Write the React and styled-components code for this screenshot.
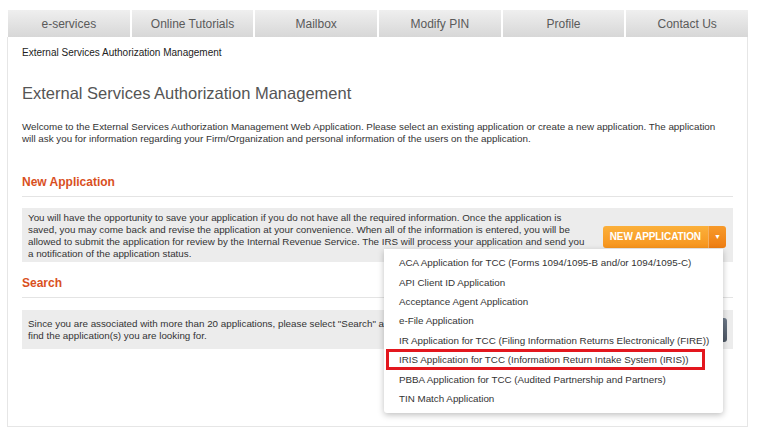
import React from "react";
import styled, { createGlobalStyle } from "styled-components";

const Global = createGlobalStyle`
  html, body { margin: 0; padding: 0; background: #fff; }
  body { font-family: "Liberation Sans", Arial, sans-serif; color: #333; }
`;

const Page = styled.div`
  width: 758px;
  height: 430px;
  padding: 10px 10px 0 7px;
  box-sizing: border-box;
  overflow: hidden;
`;

const Nav = styled.nav`
  display: flex;
  gap: 2px;
  margin-left: 1px;
  height: 27px;
`;

const Tab = styled.div`
  flex: 1;
  display: flex;
  align-items: center;
  justify-content: center;
  padding-top: 1px;
  background: linear-gradient(#efefef, #d7d7d7);
  color: #5a5a5a;
  font-size: 12px;
`;

const Container = styled.div`
  position: relative;
  border: 1px solid #e6e6e6;
  border-top: none;
  height: 390px;
  padding: 10px 14px 0 14px;
  box-sizing: border-box;
`;

const Breadcrumb = styled.div`
  font-size: 10px;
  line-height: 12px;
  color: #222;
`;

const Title = styled.h1`
  margin: 24px 0 0;
  font-size: 16.5px;
  line-height: 20px;
  font-weight: normal;
  color: #555;
`;

const Para = styled.p`
  margin: 18px 0 0;
  font-size: 9.8px;
  line-height: 12px;
  color: #333;
`;

const SectionHead = styled.h2`
  margin: ${(p) => p.$top}px 0 0;
  font-size: 12px;
  line-height: 14px;
  font-weight: bold;
  color: #d9501e;
  padding-bottom: 7px;
  border-bottom: 1px solid #e4e4e4;
`;

const GreyBox = styled.div`
  margin-top: ${(p) => p.$top}px;
  background: #ececec;
  display: flex;
  align-items: center;
  justify-content: space-between;
  padding: ${(p) => p.$pad};
  min-height: ${(p) => p.$h}px;
  box-sizing: border-box;
`;

const BoxText = styled.div`
  font-size: 9.8px;
  line-height: 12px;
  color: #333;
`;

const SplitButton = styled.div`
  display: flex;
  height: 22px;
  border-radius: 3px;
  overflow: hidden;
  margin-right: 7px;
  margin-top: 2px;
`;

const MainBtn = styled.div`
  display: flex;
  align-items: center;
  padding: 0 7px;
  background: linear-gradient(#fbb03b, #f7941d);
  color: #fff;
  font-weight: bold;
  font-size: 10px;
  letter-spacing: -0.1px;
`;

const Caret = styled.div`
  width: 17px;
  display: flex;
  align-items: center;
  justify-content: center;
  background: linear-gradient(#f79a2a, #ee7d12);
  border-left: 1px solid #f5b060;
  color: #fff;
  font-size: 7px;
`;

const SearchBtn = styled.div`
  width: 100px;
  height: 24px;
  border-radius: 3px;
  background: linear-gradient(#6f7b8b, #4c5663);
  margin-right: 6px;
`;

const Menu = styled.ul`
  position: absolute;
  left: 376px;
  top: 212px;
  width: 339px;
  margin: 0;
  padding: 4px 0 5px;
  list-style: none;
  background: #fff;
  box-shadow: 0 2px 6px rgba(0, 0, 0, 0.25);
  border-radius: 0 0 3px 3px;
`;

const Item = styled.li`
  position: relative;
  height: 19.4px;
  display: flex;
  align-items: center;
  padding-left: 15px;
  font-size: 9.8px;
  color: #333;
  white-space: nowrap;
`;

const Highlight = styled.span`
  position: absolute;
  left: 2px;
  top: -1px;
  width: 319px;
  height: 21px;
  border: 3px solid #e3171e;
  box-sizing: border-box;
`;

const menuItems = [
  "ACA Application for TCC (Forms 1094/1095-B and/or 1094/1095-C)",
  "API Client ID Application",
  "Acceptance Agent Application",
  "e-File Application",
  "IR Application for TCC (Filing Information Returns Electronically (FIRE))",
  "IRIS Application for TCC (Information Return Intake System (IRIS))",
  "PBBA Application for TCC (Audited Partnership and Partners)",
  "TIN Match Application",
];

export default function App() {
  return (
    <Page>
      <Global />
      <Nav>
        {["e-services", "Online Tutorials", "Mailbox", "Modify PIN", "Profile", "Contact Us"].map((t) => (
          <Tab key={t}>{t}</Tab>
        ))}
      </Nav>
      <Container>
        <Breadcrumb>External Services Authorization Management</Breadcrumb>
        <Title>External Services Authorization Management</Title>
        <Para>
          Welcome to the External Services Authorization Management Web Application. Please select an existing application or create a new application. The application
          <br />
          will ask you for information regarding your Firm/Organization and personal information of the users on the application.
        </Para>
        <SectionHead $top={30}>New Application</SectionHead>
        <GreyBox $top={11} $pad="3px 0 2px 6px" $h={54}>
          <BoxText>
            You will have the opportunity to save your application if you do not have all the required information. Once the application is
            <br />
            saved, you may come back and revise the application at your convenience. When all of the information is entered, you will be
            <br />
            allowed to submit the application for review by the Internal Revenue Service. The IRS will process your application and send you
            <br />
            a notification of the application status.
          </BoxText>
          <SplitButton>
            <MainBtn>NEW APPLICATION</MainBtn>
            <Caret>▼</Caret>
          </SplitButton>
        </GreyBox>
        <SectionHead $top={14}>Search</SectionHead>
        <GreyBox $top={12} $pad="0 0 0 6px" $h={39}>
          <BoxText>
            Since you are associated with more than 20 applications, please select "Search" and enter your search criteria to
            <br />
            find the application(s) you are looking for.
          </BoxText>
          <SearchBtn />
        </GreyBox>
        <Menu>
          {menuItems.map((m, i) => (
            <Item key={m}>
              {i === 5 && <Highlight />}
              {m}
            </Item>
          ))}
        </Menu>
      </Container>
    </Page>
  );
}
